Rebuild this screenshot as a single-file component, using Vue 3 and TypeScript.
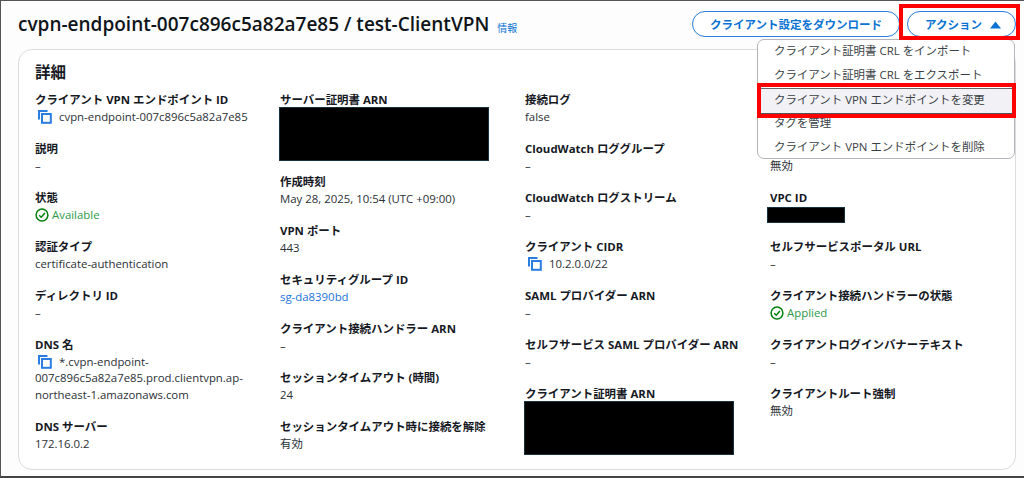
<script setup lang="ts">
type Field = {
  label: string
  value?: string
  kind?: 'copy' | 'link' | 'status' | 'redact'
  lines?: number
  box?: { w: number; h: number; x: number; y: number }
}

const columns: Field[][] = [
  [
    { label: 'クライアント VPN エンドポイント ID', value: 'cvpn-endpoint-007c896c5a82a7e85', kind: 'copy' },
    { label: '説明', value: '–' },
    { label: '状態', value: 'Available', kind: 'status' },
    { label: '認証タイプ', value: 'certificate-authentication' },
    { label: 'ディレクトリ ID', value: '–' },
    { label: 'DNS 名', value: '*.cvpn-endpoint-007c896c5a82a7e85.prod.clientvpn.ap-northeast-1.amazonaws.com', kind: 'copy' },
    { label: 'DNS サーバー', value: '172.16.0.2' }
  ],
  [
    { label: 'サーバー証明書 ARN', kind: 'redact', lines: 3, box: { w: 210, h: 54, x: -1, y: -2 } },
    { label: '作成時刻', value: 'May 28, 2025, 10:54 (UTC +09:00)' },
    { label: 'VPN ポート', value: '443' },
    { label: 'セキュリティグループ ID', value: 'sg-da8390bd', kind: 'link' },
    { label: 'クライアント接続ハンドラー ARN', value: '–' },
    { label: 'セッションタイムアウト (時間)', value: '24' },
    { label: 'セッションタイムアウト時に接続を解除', value: '有効' }
  ],
  [
    { label: '接続ログ', value: 'false' },
    { label: 'CloudWatch ロググループ', value: '–' },
    { label: 'CloudWatch ログストリーム', value: '–' },
    { label: 'クライアント CIDR', value: '10.2.0.0/22', kind: 'copy' },
    { label: 'SAML プロバイダー ARN', value: '–' },
    { label: 'セルフサービス SAML プロバイダー ARN', value: '–' },
    { label: 'クライアント証明書 ARN', kind: 'redact', lines: 3, box: { w: 210, h: 54, x: -1, y: -2 } }
  ],
  [
    { label: '', value: '' },
    { label: '', value: '無効' },
    { label: 'VPC ID', kind: 'redact', lines: 1, box: { w: 78, h: 16, x: -3, y: 0 } },
    { label: 'セルフサービスポータル URL', value: '–' },
    { label: 'クライアント接続ハンドラーの状態', value: 'Applied', kind: 'status' },
    { label: 'クライアントログインバナーテキスト', value: '–' },
    { label: 'クライアントルート強制', value: '無効' }
  ]
]

const menuItems: string[] = [
  'クライアント証明書 CRL をインポート',
  'クライアント証明書 CRL をエクスポート',
  'クライアント VPN エンドポイントを変更',
  'タグを管理',
  'クライアント VPN エンドポイントを削除'
]
</script>

<template>
  <div class="page">
    <header class="head">
      <h1 class="title">cvpn-endpoint-007c896c5a82a7e85 / test-ClientVPN</h1>
      <span class="info">情報</span>
      <div class="actions">
        <button class="btn dl">クライアント設定をダウンロード</button>
        <button class="btn act">
          アクション
          <svg class="caret" width="11" height="8" viewBox="0 0 11 8"><path d="M5.5 .5 11 7.5H0z" fill="#0972d3" /></svg>
        </button>
      </div>
    </header>

    <section class="card">
      <h2 class="card-title">詳細</h2>
      <div class="grid">
        <div v-for="(col, c) in columns" :key="c" class="col">
          <div v-for="(f, r) in col" :key="r" class="field">
            <div class="label">{{ f.label }}</div>
            <div v-if="f.kind === 'redact'" class="value redact-slot" :class="'lines' + f.lines">
              <div
                class="redact"
                :style="{ width: f.box!.w + 'px', height: f.box!.h + 'px', left: f.box!.x + 'px', top: f.box!.y + 'px' }"
              ></div>
            </div>
            <div v-else-if="f.kind === 'copy'" class="value">
              <svg class="copy" width="15" height="15" viewBox="0 0 15 15" fill="none" stroke="#2a7de1" stroke-width="2">
                <rect x="5" y="5" width="8.8" height="8.8" />
                <path d="M10.5 2H2V10.5" />
              </svg>{{ f.value }}
            </div>
            <div v-else-if="f.kind === 'link'" class="value link">{{ f.value }}</div>
            <div v-else-if="f.kind === 'status'" class="value ok">
              <svg class="check" width="14" height="14" viewBox="0 0 14 14" fill="none" stroke="#037f0c" stroke-width="1.5">
                <circle cx="7" cy="7" r="5.9" />
                <path d="M4.2 7.2 6.2 9.2 9.9 5" />
              </svg>{{ f.value }}
            </div>
            <div v-else class="value">{{ f.value }}</div>
          </div>
        </div>
      </div>
    </section>

    <ul class="menu">
      <li v-for="(m, i) in menuItems" :key="m" class="item" :class="{ hot: i === 2 }">{{ m }}</li>
    </ul>
    <div class="mark mark-btn"></div>
    <div class="mark mark-item"></div>
  </div>
</template>

<style>
html, body { margin: 0; padding: 0; background: #fff; }
</style>

<style scoped>
.page {
  position: relative;
  box-sizing: border-box;
  width: 1024px;
  height: 478px;
  overflow: hidden;
  background: #fdfdfd;
  border-top: 1px solid #555;
  border-left: 1px solid #555;
  border-bottom: 2px solid #444;
  padding: 0 8px 0 17px;
  font-family: "Open Sans", "Noto Sans CJK JP", sans-serif;
  color: #16191f;
}
.head {
  display: flex;
  align-items: center;
  height: 48px;
}
.title {
  margin: 0;
  font-size: 19px;
  font-weight: 600;
  line-height: 24px;
  white-space: nowrap;
  color: #0f141a;
  position: relative;
  top: -1px;
}
.info {
  margin: 4px 0 0 8px;
  font-size: 10px;
  color: #0972d3;
}
.actions {
  margin-left: auto;
  display: flex;
  gap: 7px;
  margin-top: -3px;
}
.btn {
  box-sizing: border-box;
  height: 26px;
  padding: 0;
  border: 1.5px solid #2a7de1;
  border-radius: 13px;
  background: #fff;
  color: #0972d3;
  font: 600 11.5px "Open Sans", "Noto Sans CJK JP", sans-serif;
}
.dl { width: 208px; }
.act { width: 109px; padding-left: 3px; }
.caret { margin-left: 5px; }
.card {
  box-sizing: border-box;
  width: 998px;
  height: 421px;
  border: 1px solid #dcdcdc;
  border-radius: 14px;
  background: #fff;
  padding: 11px 16px 0;
}
.card-title {
  margin: 0 0 9px;
  font-size: 15.5px;
  font-weight: 600;
  line-height: 22px;
}
.grid {
  display: grid;
  grid-template-columns: repeat(4, 245px);
}
.col {
  display: flex;
  flex-direction: column;
  gap: 16px;
  padding-right: 24px;
  min-width: 0;
}
.label {
  font-size: 11.45px;
  font-weight: 700;
  line-height: 16.5px;
  min-height: 16.5px;
  white-space: nowrap;
}
.value {
  font-size: 11.4px;
  line-height: 16.5px;
  min-height: 16.5px;
  color: #2b2f36;
  overflow-wrap: anywhere;
}
.redact-slot { position: relative; }
.lines3 { height: 49.5px; }
.lines1 { height: 16.5px; }
.redact {
  position: absolute;
  background: #000;
  border: 1px solid #16303d;
  box-sizing: border-box;
}
.copy {
  vertical-align: -3.5px;
  margin: 0 7px 0 2px;
}
.link { color: #1a74d8; }
.ok { color: #2b9a47; }
.check {
  vertical-align: -3px;
  margin-right: 3px;
}
.menu {
  position: absolute;
  left: 756px;
  top: 38px;
  box-sizing: border-box;
  width: 258px;
  height: 120px;
  margin: 0;
  padding: 0;
  list-style: none;
  background: #fff;
  border: 1px solid #b4b4bb;
  border-radius: 7px;
}
.item {
  box-sizing: border-box;
  height: 24px;
  padding-left: 16px;
  font-size: 11.45px;
  line-height: 22px;
  color: #3a3f46;
  white-space: nowrap;
}
.item.hot {
  background: #f1f1f6;
  border-top: 1px solid #666;
  border-bottom: 2px solid #555;
  margin: 0 -1px;
  padding-left: 17px;
  height: 27px;
  margin-top: 0;
  margin-bottom: -3px;
}
.mark {
  position: absolute;
  box-sizing: border-box;
  border: 4px solid #f00;
  pointer-events: none;
}
.mark-btn {
  left: 898px;
  top: 3px;
  width: 121px;
  height: 36px;
}
.mark-item {
  left: 756px;
  top: 82px;
  width: 259px;
  height: 35px;
}
</style>
